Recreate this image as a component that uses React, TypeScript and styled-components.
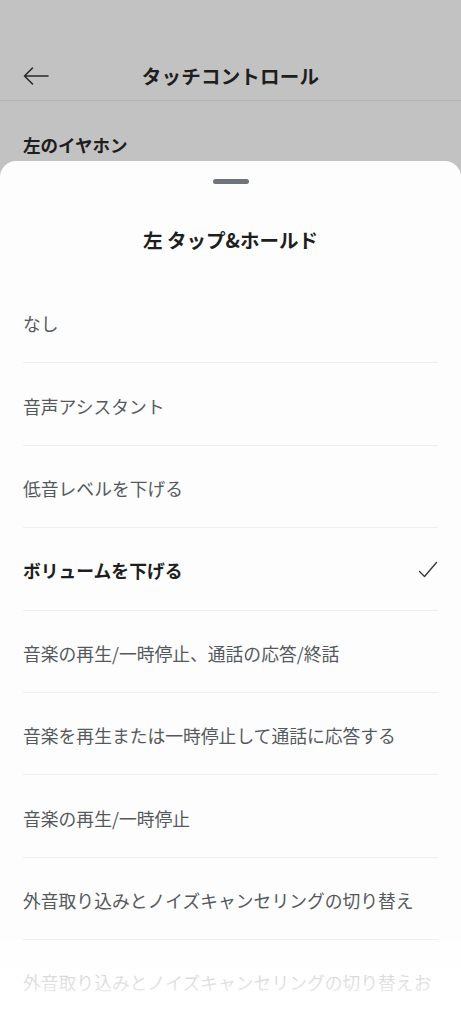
import React from "react";
import styled, { createGlobalStyle } from "styled-components";

const Global = createGlobalStyle`
  html, body { margin: 0; padding: 0; }
  body {
    width: 461px;
    height: 1024px;
    overflow: hidden;
    background: #c2c2c2;
    font-family: "Noto Sans CJK JP", "Noto Sans", sans-serif;
  }
`;

const Screen = styled.div`
  position: relative;
  width: 461px;
  height: 1024px;
  display: flex;
  flex-direction: column;
  background: #c2c2c2;
  overflow: hidden;
`;

const Header = styled.div`
  height: 101px;
  box-sizing: border-box;
  padding-top: 51px;
  display: grid;
  grid-template-columns: 60px 1fr 60px;
  align-items: center;
  border-bottom: 1.5px solid #b1b1b1;
`;

const Back = styled.div`
  display: flex;
  align-items: center;
  padding-left: 22px;
  height: 48px;
`;

const Title = styled.div`
  text-align: center;
  font-size: 19.5px;
  font-weight: 700;
  color: #1e1e1e;
  line-height: 48px;
  letter-spacing: 0.2px;
`;

const Section = styled.div`
  padding: 32px 23px 0;
  font-size: 17.5px;
  font-weight: 700;
  color: #1e1e1e;
  line-height: 24px;
  height: 28px;
`;

const Sheet = styled.div`
  flex: 1;
  background: #fdfdfd;
  border-radius: 16px 16px 0 0;
  display: flex;
  flex-direction: column;
  align-items: stretch;
`;

const HandleWrap = styled.div`
  display: flex;
  justify-content: center;
  padding-top: 18px;
`;

const Handle = styled.div`
  width: 36px;
  height: 4.5px;
  border-radius: 3px;
  background: #6f747b;
`;

const SheetTitle = styled.div`
  text-align: center;
  font-size: 19.5px;
  font-weight: 700;
  color: #1e1e1e;
  line-height: 30px;
  padding-top: 41px;
  height: 97.5px;
  box-sizing: border-box;
`;

const List = styled.div`
  display: flex;
  flex-direction: column;
  padding: 0 23px;
`;

const Row = styled.div<{ $selected?: boolean }>`
  height: 82.4px;
  box-sizing: border-box;
  border-bottom: 1px solid #efefef;
  display: flex;
  align-items: center;
  justify-content: space-between;
  font-size: 17.8px;
  line-height: 24px;
  padding-top: 3px;
  font-weight: ${(p) => (p.$selected ? 700 : 400)};
  color: ${(p) => (p.$selected ? "#1e1e1e" : "#55595e")};
  white-space: nowrap;
`;

const Fade = styled.div`
  position: absolute;
  left: 0;
  right: 0;
  bottom: 0;
  height: 84px;
  background: linear-gradient(
    to bottom,
    rgba(255, 255, 255, 0.6) 0px,
    rgba(255, 255, 255, 0.85) 50px,
    #ffffff 55px,
    #ffffff 100%
  );
  pointer-events: none;
`;

const items = [
  "なし",
  "音声アシスタント",
  "低音レベルを下げる",
  "ボリュームを下げる",
  "音楽の再生/一時停止、通話の応答/終話",
  "音楽を再生または一時停止して通話に応答する",
  "音楽の再生/一時停止",
  "外音取り込みとノイズキャンセリングの切り替え",
  "外音取り込みとノイズキャンセリングの切り替えお",
];

const ArrowIcon = () => (
  <svg width="28" height="20" viewBox="0 0 28 20" fill="none">
    <path
      d="M26 10H2.5M10.5 2L2.5 10L10.5 18"
      stroke="#2a2a2a"
      strokeWidth="1.6"
      strokeLinecap="round"
      strokeLinejoin="round"
    />
  </svg>
);

const Check = () => (
  <svg width="20" height="18" viewBox="0 0 20 18" fill="none">
    <path
      d="M1.5 10.5L6.5 15.5L18.5 1.5"
      stroke="#3a3a3a"
      strokeWidth="1.4"
      strokeLinecap="round"
      strokeLinejoin="round"
    />
  </svg>
);

export default function App() {
  return (
    <Screen>
      <Global />
      <Header>
        <Back>
          <ArrowIcon />
        </Back>
        <Title>タッチコントロール</Title>
        <div />
      </Header>
      <Section>左のイヤホン</Section>
      <Sheet>
        <HandleWrap>
          <Handle />
        </HandleWrap>
        <SheetTitle>左 タップ&ホールド</SheetTitle>
        <List>
          {items.map((t, i) => (
            <Row key={i} $selected={i === 3}>
              <span>{t}</span>
              {i === 3 && <Check />}
            </Row>
          ))}
        </List>
      </Sheet>
      <Fade />
    </Screen>
  );
}
